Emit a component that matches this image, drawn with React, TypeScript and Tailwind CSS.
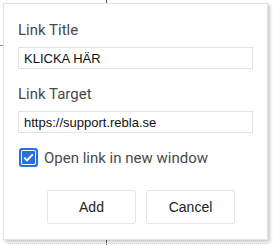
import React, { useState } from "react";

const labelCls = "block text-[15px] leading-[18px] text-[#4a4a4a] font-['Roboto',sans-serif]";
const inputCls =
  "w-full h-[22px] border border-[#e2e2e2] bg-white pl-[5px] text-[13px] text-[#111] font-['Liberation_Sans',Arial,sans-serif] outline-none";
const btnCls =
  "w-[89px] h-[34px] border border-[#e6e6e6] rounded-[2px] bg-white text-[14px] text-[#222] font-['Liberation_Sans',Arial,sans-serif]";

const CheckBox = ({ checked, onClick }: { checked: boolean; onClick: () => void }) => (
  <div
    onClick={onClick}
    className="w-[19px] h-[19px] rounded-[3px] bg-[#2a6fdb] p-[2px] cursor-pointer"
  >
    <div className="w-full h-full rounded-[2px] bg-white p-[1px]">
      <div className="w-full h-full rounded-[1px] bg-[#2a6fdb] flex items-center justify-center">
        {checked && (
          <svg width="11" height="9" viewBox="0 0 11 9">
            <path d="M1.2 4.6 L4 7.4 L9.8 1.4" fill="none" stroke="#fff" strokeWidth="2" />
          </svg>
        )}
      </div>
    </div>
  </div>
);

export default function App() {
  const [title, setTitle] = useState("KLICKA HÄR");
  const [target, setTarget] = useState("https://support.rebla.se");
  const [newWindow, setNewWindow] = useState(true);

  return (
    <div className="relative w-[273px] h-[245px] bg-white overflow-hidden pt-[3px] pl-[3px]">
      {/* bits of the page behind the dialog */}
      <div className="absolute left-[106px] top-0 w-px h-[3px] bg-[#555]" />
      <div className="absolute left-[106px] top-[240px] w-px h-[5px] bg-[#555]" />
      <div className="absolute left-0 top-[45px] w-[3px] h-px bg-[#888]" />
      <div className="absolute left-[8px] right-[4px] top-[243px] border-t border-dotted border-[#d8d8d8]" />

      <div className="relative w-[265px] h-[237px] bg-white border border-[#e4e4e4] shadow-[2px_2px_3px_rgba(0,0,0,0.22)] px-[14px] pt-[17px]">
        <label className={labelCls}>Link Title</label>
        <input
          className={`${inputCls} mt-2`}
          value={title}
          onChange={(e) => setTitle(e.target.value)}
        />

        <label className={`${labelCls} mt-4`}>Link Target</label>
        <input
          className={`${inputCls} mt-2`}
          value={target}
          onChange={(e) => setTarget(e.target.value)}
        />

        <div className="flex items-center gap-[6px] mt-[15px] ml-px h-[19px]">
          <CheckBox checked={newWindow} onClick={() => setNewWindow(!newWindow)} />
          <span className="text-[15px] leading-[18px] text-[#4a4a4a] font-['Roboto',sans-serif]">
            Open link in new window
          </span>
        </div>

        <div className="flex gap-[10px] mt-[23px] ml-[29px]">
          <button className={btnCls}>Add</button>
          <button className={btnCls}>Cancel</button>
        </div>
      </div>
    </div>
  );
}
